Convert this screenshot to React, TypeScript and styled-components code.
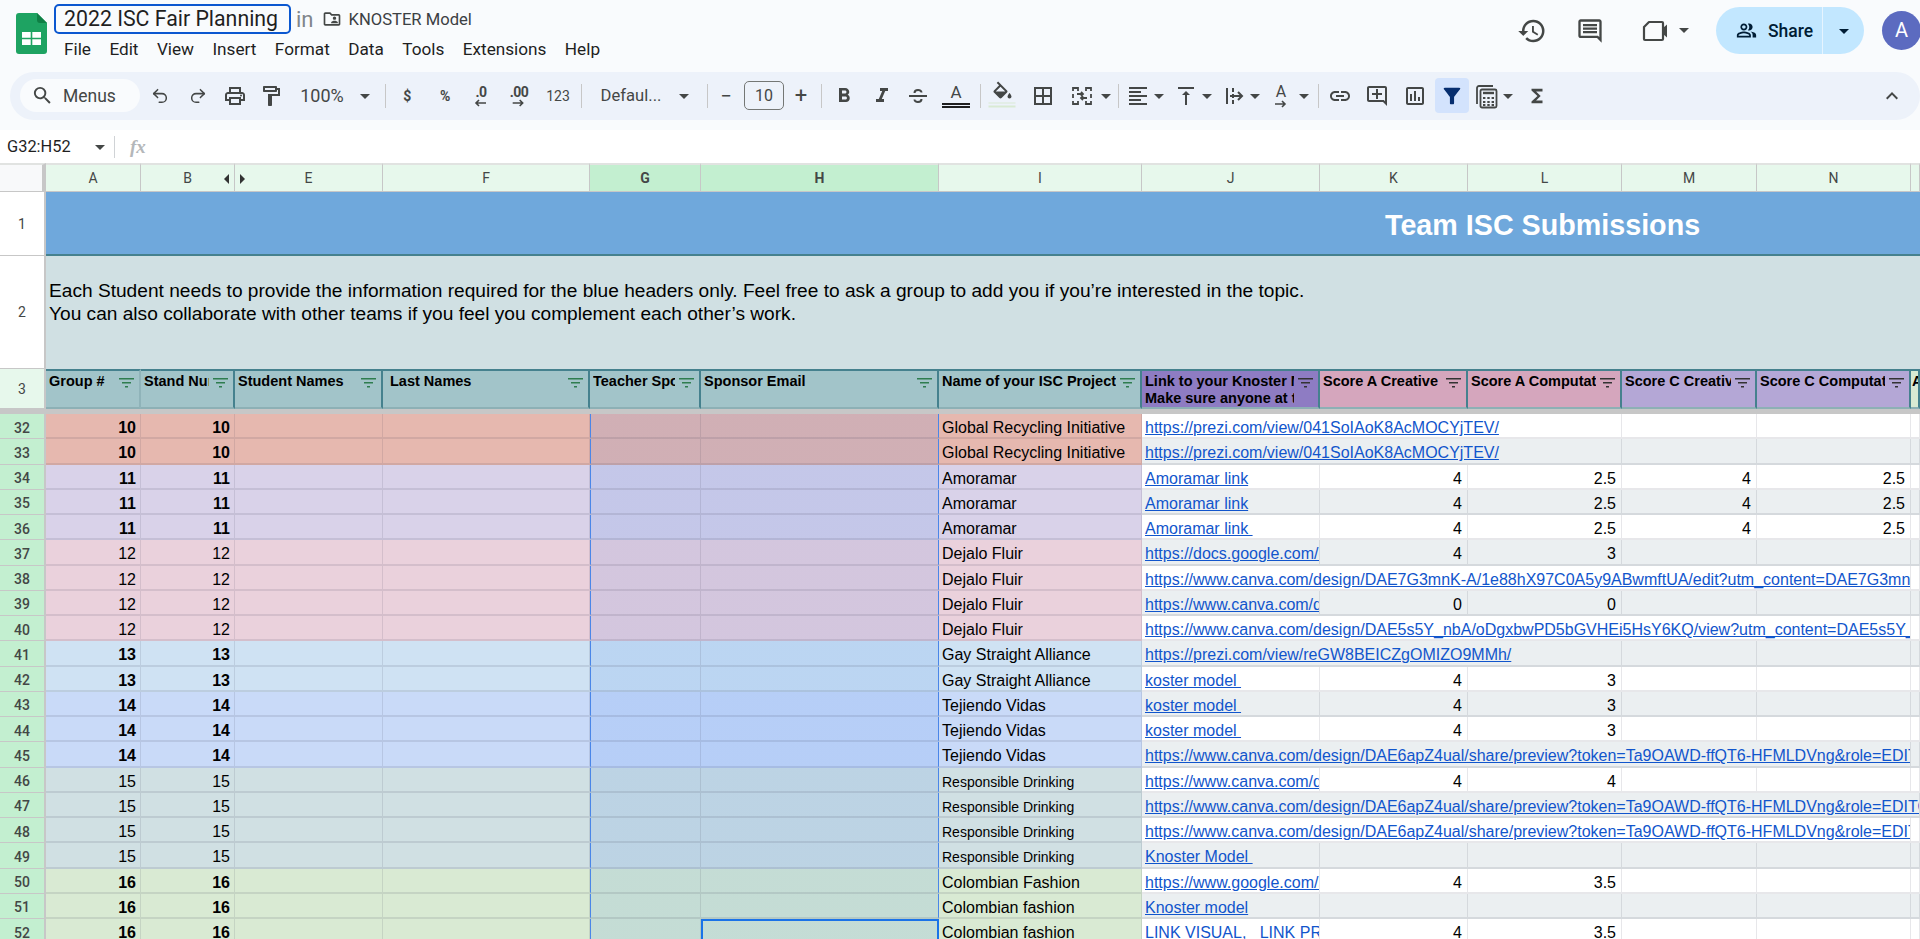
import React from 'react';
import styled, { createGlobalStyle } from 'styled-components';
import { Redo2, Undo2 } from 'lucide-react';
import {
  MdArrowDropDown, MdBorderAll, MdExpandLess, MdFilterAlt, MdFormatAlignLeft, MdFormatBold,
  MdFormatItalic, MdFunctions, MdHistory, MdLink, MdOutlineAddComment, MdOutlineComment, MdOutlineFolderShared,
  MdOutlineFormatPaint, MdOutlineInsertChart, MdOutlinePeopleAlt, MdOutlinePrint,
  MdSearch, MdVerticalAlignTop,
} from 'react-icons/md';

const ui = '"Roboto", "Liberation Sans", sans-serif';
const sheet = '"Liberation Sans", Arial, sans-serif';
const iconInk = '#444746';
const COLS = '46px 95px 94px 148px 207px 111px 238px 203px 178px 148px 154px 135px 154px 9px';
const selectTint = 'linear-gradient(rgba(14, 101, 235, 0.1), rgba(14, 101, 235, 0.1))';

const Global = createGlobalStyle`
  html, body { margin: 0; padding: 0; background: #fff; overflow: hidden; }
  * { box-sizing: border-box; }
`;

const Page = styled.div`
  position: relative;
  width: 1920px;
  height: 939px;
  overflow: hidden;
  font-family: ${ui};
`;

const Header = styled.header`
  position: relative;
  height: 130px;
  background: #f9fbfd;
`;

const Logo = styled.svg`
  position: absolute;
  left: 16px;
  top: 13px;
`;

const TitleRow = styled.div`
  position: absolute;
  left: 54px;
  top: 4px;
  display: flex;
  align-items: center;
  height: 30px;
`;

const TitleBox = styled.div`
  width: 237px;
  height: 30px;
  border: 2px solid #0b57d0;
  border-radius: 5px;
  padding-left: 8px;
  font-size: 21.3px;
  line-height: 25px;
  color: #1f1f1f;
  white-space: nowrap;
`;

const InWord = styled.span`
  margin-left: 5px;
  font-size: 22px;
  color: #80868b;
`;

const FolderMark = styled.span`
  display: flex;
  margin-left: 8px;
  color: ${iconInk};
`;

const FolderName = styled.span`
  margin-left: 7px;
  font-size: 16.6px;
  color: #3c4043;
  white-space: nowrap;
`;

const MenuBar = styled.nav`
  position: absolute;
  left: 64px;
  top: 39px;
  display: flex;
  gap: 18.4px;
  font-size: 17.2px;
  line-height: 21px;
  color: #1f1f1f;
`;

const Toolbar = styled.div`
  position: absolute;
  left: 10px;
  top: 72px;
  width: 1910px;
  height: 48px;
  border-radius: 24px;
  background: #edf2fa;
`;

const SearchPill = styled.div`
  position: absolute;
  left: 20px;
  top: 79px;
  width: 120px;
  height: 33px;
  border-radius: 17px;
  background: #f9fbfd;
  display: flex;
  align-items: center;
  padding-left: 11px;
  gap: 9px;
  font-size: 17.5px;
  color: #444746;
`;

const ToolSlot = styled.div<{ $x: number; $y?: number }>`
  position: absolute;
  left: ${(p) => p.$x}px;
  top: ${(p) => p.$y ?? 96}px;
  transform: translate(-50%, -50%);
  display: flex;
  flex-direction: column;
  align-items: center;
  color: ${iconInk};
  white-space: nowrap;
  line-height: 1;
`;

const SlotText = styled.span<{ $size: number }>`
  font-size: ${(p) => p.$size}px;
`;

const ToolSep = styled.div<{ $x: number }>`
  position: absolute;
  left: ${(p) => p.$x}px;
  top: 84px;
  width: 1px;
  height: 24px;
  background: #c7c7c7;
`;

const FontSizeBox = styled.div`
  position: absolute;
  left: 744px;
  top: 81px;
  width: 40px;
  height: 29px;
  border: 1px solid #747775;
  border-radius: 5px;
  text-align: center;
  font-size: 16px;
  line-height: 27px;
  color: #444746;
`;

const FilterActive = styled.div`
  position: absolute;
  left: 1435px;
  top: 78px;
  width: 34px;
  height: 35px;
  border-radius: 4px;
  background: #d3e3fd;
`;

const DecimalText = styled.span`
  font-size: 14px;
  font-weight: 700;
  letter-spacing: -0.5px;
`;

const TextColorLetter = styled.span`
  display: block;
  width: 28px;
  text-align: center;
  font-size: 17px;
  line-height: 16px;
  padding-bottom: 3px;
  border-bottom: 5px double #1f1f1f;
`;

const FillBar = styled.span`
  display: block;
  width: 27px;
  height: 5px;
  margin-top: 1px;
  border-top: 1px solid #d9ead3;
  border-bottom: 2px solid #d9ead3;
`;

const SharePill = styled.div`
  position: absolute;
  left: 1716px;
  top: 7px;
  width: 148px;
  height: 47px;
  border-radius: 24px;
  background: #c2e7ff;
  display: flex;
  align-items: center;
  color: #001d35;
  font-size: 17.5px;
  font-weight: 500;
`;

const ShareMain = styled.div`
  width: 107px;
  height: 100%;
  padding-left: 20px;
  display: flex;
  align-items: center;
  gap: 11px;
  border-right: 1px solid #e6f4ff;
`;

const ShareCaret = styled.div`
  flex: 1;
  display: flex;
  justify-content: center;
`;

const Avatar = styled.div`
  position: absolute;
  left: 1882px;
  top: 11px;
  width: 39px;
  height: 39px;
  border-radius: 50%;
  background: #5c6bc0;
  color: #fff;
  font-size: 20px;
  line-height: 39px;
  text-align: center;
`;

const FormulaBar = styled.div`
  position: relative;
  height: 33px;
  background: #fff;
  display: flex;
  align-items: center;
  padding-left: 7px;
  color: #1f1f1f;
  font-size: 16.4px;
`;

const NameBox = styled.div`
  width: 83px;
`;

const FormulaCaret = styled.div`
  width: 26px;
  display: flex;
  color: ${iconInk};
  margin-left: -2px;
`;

const FormulaSep = styled.div`
  width: 1px;
  height: 22px;
  background: #d0d3d6;
`;

const FxMark = styled.div`
  margin-left: 15px;
  font-family: "Liberation Serif", serif;
  font-style: italic;
  font-weight: 700;
  font-size: 19px;
  color: #b4b7ba;
`;

const Grid = styled.div`
  display: grid;
  grid-template-columns: ${COLS};
  grid-template-rows: 29px 64px 113px 40px 5px repeat(21, 25.25px);
  width: 1920px;
  font-family: ${sheet};
  color: #000;
`;

const Corner = styled.div`
  background: #f8f9fa;
  border-top: 2px solid #e1e3e1;
  border-right: 4px solid #c7c7c7;
  border-bottom: 1px solid #c7c7c7;
`;

const ColLabel = styled.div<{ $on?: boolean }>`
  position: relative;
  display: flex;
  align-items: center;
  justify-content: center;
  background: ${(p) => (p.$on ? '#c3efd0' : '#e7f8ec')};
  border-top: 2px solid #e1e3e1;
  border-right: 1px solid #c7c7c7;
  border-bottom: 1px solid #c7c7c7;
  font-family: ${ui};
  font-size: 14px;
  font-weight: ${(p) => (p.$on ? 700 : 400)};
  color: #444746;
`;

const HiddenArrow = styled.span<{ $side: 'left' | 'right' }>`
  position: absolute;
  top: 9px;
  ${(p) => (p.$side === 'left' ? 'right: 5px' : 'left: 5px')};
  border-top: 5px solid transparent;
  border-bottom: 5px solid transparent;
  ${(p) => (p.$side === 'left' ? 'border-right: 5px solid #333' : 'border-left: 5px solid #333')};
`;

const RowLabel = styled.div<{ $tone: 'plain' | 'soft' | 'on' }>`
  display: flex;
  align-items: center;
  justify-content: center;
  padding-top: ${(p) => (p.$tone === 'on' ? 3 : 0)}px;
  background: ${(p) => ({ plain: '#fff', soft: '#e7f8ec', on: '#c3efd0' }[p.$tone])};
  border-right: 2px solid #c7c7c7;
  border-bottom: 1px solid #c7c7c7;
  font-family: ${ui};
  font-size: 14px;
  font-weight: ${(p) => (p.$tone === 'on' ? 500 : 400)};
  color: #444746;
`;

const Banner = styled.div`
  grid-column: 2 / -1;
  background: #6fa8dc;
  border-bottom: 2px solid #45818e;
  padding: 16px 0 0 1339px;
  color: #fff;
  font-size: 28.7px;
  font-weight: 700;
  line-height: 34px;
  white-space: nowrap;
`;

const Notice = styled.div`
  grid-column: 2 / -1;
  background: #d0e0e3;
  padding: 23px 0 0 3px;
  font-size: 19.14px;
  line-height: 23px;
  white-space: nowrap;
`;

const ColHead = styled.div<{ $bg: string; $soft?: boolean }>`
  position: relative;
  background: ${(p) => p.$bg};
  border-top: 2px solid #45818e;
  border-right: 2px solid ${(p) => (p.$soft ? '#8fb3b9' : '#45818e')};
  border-bottom: 2px solid #8db0b5;
  font-size: 14.5px;
  font-weight: 700;
  line-height: 17px;
  white-space: nowrap;
`;

const HeadLabel = styled.div<{ $inset?: number; $open?: boolean }>`
  margin: 2px ${(p) => (p.$open ? 0 : 24)}px 0 ${(p) => p.$inset ?? 3}px;
  overflow: hidden;
`;

const FilterGlyph = styled.svg`
  position: absolute;
  right: 5px;
  top: 6px;
`;

const FreezeBar = styled.div`
  grid-column: 1 / -1;
  background: #c7c7c7;
`;

const Tinted = styled.div<{ $bg: string; $sel?: boolean; $leftEdge?: boolean; $rightEdge?: boolean }>`
  display: flex;
  align-items: center;
  min-width: 0;
  padding-top: 5px;
  overflow: hidden;
  background-color: ${(p) => p.$bg};
  background-image: ${(p) => (p.$sel ? selectTint : 'none')};
  border-right: 1px solid ${(p) => (p.$rightEdge ? '#4a86e8' : 'rgba(60, 60, 80, 0.12)')};
  border-bottom: 2px solid rgba(60, 60, 80, 0.12);
  border-left: ${(p) => (p.$leftEdge ? '1px solid #4a86e8' : '0')};
`;

const GroupCell = styled(Tinted)<{ $bold: boolean }>`
  justify-content: flex-end;
  padding-right: 4px;
  font-size: 16px;
  font-weight: ${(p) => (p.$bold ? 700 : 400)};
`;

const ActiveCell = styled(Tinted)`
  border: 2px solid #1a73e8;
`;

const ProjectCell = styled(Tinted)<{ $small: boolean }>`
  padding-left: 3px;
  font-size: ${(p) => (p.$small ? 14 : 16)}px;
  white-space: nowrap;
`;

const LinkCell = styled(Tinted)<{ $span: number }>`
  grid-column: span ${(p) => p.$span};
  padding-left: 3px;
`;

const LinkText = styled.a`
  color: #1155cc;
  text-decoration: underline;
  font-size: 16px;
  white-space: pre;
`;

const ScoreCell = styled(Tinted)`
  justify-content: flex-end;
  padding-right: 5px;
  font-size: 16px;
`;

const Lines = ({ dark }: { dark?: boolean }) => (
  <FilterGlyph width="15" height="12" viewBox="0 0 15 12" fill={dark ? '#333' : '#2e7d4f'}>
    <rect x="0" y="1" width="15" height="1.5" />
    <rect x="3" y="5" width="9" height="1.5" />
    <rect x="6" y="9" width="3" height="1.5" />
  </FilterGlyph>
);

const SheetsLogo = () => (
  <Logo width="31" height="41" viewBox="0 0 31 41">
    <path d="M3 0h18l10 10v28a3 3 0 0 1-3 3H3a3 3 0 0 1-3-3V3a3 3 0 0 1 3-3z" fill="#1ea362" />
    <path d="M21 0l10 10h-7a3 3 0 0 1-3-3z" fill="#0f7f45" />
    <path d="M6 19h19v13H6z" fill="#fff" />
    <path d="M14.7 19h1.6v13h-1.6zM6 24.7h19v1.6H6z" fill="#1ea362" />
  </Logo>
);

const Caret = ({ x, y }: { x: number; y?: number }) => (
  <ToolSlot $x={x} $y={y}>
    <MdArrowDropDown size={24} />
  </ToolSlot>
);

const ArrowUnder = ({ left }: { left?: boolean }) => (
  <svg width="14" height="8" viewBox="0 0 14 8" fill="none" stroke={iconInk} strokeWidth="1.6">
    <path d={left ? 'M12 4H2M5 1L2 4l3 3' : 'M1 4h10M8 1l3 3-3 3'} />
  </svg>
);

const MergeIcon = () => (
  <svg width="24" height="24" viewBox="0 0 24 24" fill="none" stroke={iconInk} strokeWidth="1.8">
    <path d="M8 7V4H3v3M3 17v3h5v-3M3 10v4M16 7V4h5v3M21 17v3h-5v-3M21 10v4" />
    <path d="M11 8l2 2-2 2M7 10h6M13 12l-2 2 2 2M11 14h6" />
  </svg>
);

const WrapIcon = () => (
  <svg width="24" height="24" viewBox="0 0 24 24" fill="none" stroke={iconInk} strokeWidth="2">
    <path d="M5 4v16M11 4v4M11 10v4M11 16v4M8 12h12M16 8l4 4-4 4" />
  </svg>
);

const FunctionCard = () => (
  <svg width="24" height="26" viewBox="0 0 24 26" fill="none" stroke={iconInk} strokeWidth="1.8">
    <path d="M3 21V5a2 2 0 0 1 2-2h14" />
    <rect x="6.5" y="6.5" width="16" height="18" rx="1.5" />
    <path d="M9 10h11" strokeWidth="2.4" />
    <path d="M9 15h2.4M13.3 15h2.4M17.6 15H20M9 19h2.4M13.3 19h2.4M17.6 19H20M9 22h2.4M13.3 22h2.4M17.6 22H20" strokeWidth="2" />
  </svg>
);

const StrikeIcon = () => (
  <svg width="24" height="24" viewBox="0 0 24 24" fill="none" stroke={iconInk} strokeWidth="2">
    <path d="M3 12h18M8.5 9c0-4 7-4 7-.5M8.5 15.5c0 3.5 7 3.5 7-.5" />
  </svg>
);

const FillIcon = () => (
  <svg width="24" height="21" viewBox="0 0 24 19" fill={iconInk}>
    <path d="M16.56 8.94L7.62 0 6.21 1.41l2.38 2.38-5.15 5.15c-.59.59-.59 1.54 0 2.12l5.5 5.5c.29.29.68.44 1.06.44s.77-.15 1.06-.44l5.5-5.5c.59-.58.59-1.53 0-2.11zM5.21 10L10 5.21 14.79 10H5.21zM19 11.5s-2 2.17-2 3.5c0 1.1.9 2 2 2s2-.9 2-2c0-1.33-2-3.5-2-3.5z" />
  </svg>
);

const MeetIcon = () => (
  <svg width="28" height="22" viewBox="0 0 28 22" fill="none" stroke={iconInk} strokeWidth="2.2">
    <path d="M8 2h13a1 1 0 0 1 1 1v16a1 1 0 0 1-1 1H4a1 1 0 0 1-1-1V7z" strokeLinejoin="round" />
    <path d="M22 8l4-3.5v13L22 14z" fill={iconInk} stroke="none" />
  </svg>
);

type Kind = { group: number; name: string; bg: string; bold: boolean; small?: boolean };

const c = {
  red: '#e6b8af', violet: '#d9d2e9', pink: '#ead1dc', sky: '#cfe2f3',
  blue: '#c9daf8', teal: '#d0e0e3', green: '#d9ead3',
};

const recycling: Kind = { group: 10, name: 'Global Recycling Initiative', bg: c.red, bold: true };
const amoramar: Kind = { group: 11, name: 'Amoramar', bg: c.violet, bold: true };
const dejalo: Kind = { group: 12, name: 'Dejalo Fluir', bg: c.pink, bold: false };
const alliance: Kind = { group: 13, name: 'Gay Straight Alliance', bg: c.sky, bold: true };
const vidas: Kind = { group: 14, name: 'Tejiendo Vidas', bg: c.blue, bold: true };
const drinking: Kind = { group: 15, name: 'Responsible Drinking', bg: c.teal, bold: false, small: true };
const fashion: Kind = { group: 16, name: 'Colombian Fashion', bg: c.green, bold: true };

const canvaShare = 'https://www.canva.com/design/DAE6apZ4ual/share/preview?token=Ta9OAWD-ffQT6-HFMLDVng&role=EDITOR';
const prezi = 'https://prezi.com/view/041SoIAoK8AcMOCYjTEV/';

type Row = { kind: Kind; name?: string; link: string; span?: number; scores?: string[] };

const rows: Row[] = [
  { kind: recycling, link: prezi, span: 3, scores: ['', ''] },
  { kind: recycling, link: prezi, span: 3, scores: ['', ''] },
  { kind: amoramar, link: 'Amoramar link', scores: ['4', '2.5', '4', '2.5'] },
  { kind: amoramar, link: 'Amoramar link', scores: ['4', '2.5', '4', '2.5'] },
  { kind: amoramar, link: 'Amoramar link ', scores: ['4', '2.5', '4', '2.5'] },
  { kind: dejalo, link: 'https://docs.google.com/document/d/1', scores: ['4', '3', '', ''] },
  { kind: dejalo, link: 'https://www.canva.com/design/DAE7G3mnK-A/1e88hX97C0A5y9ABwmftUA/edit?utm_content=DAE7G3mnK-A', span: 5 },
  { kind: dejalo, link: 'https://www.canva.com/design/DAE', scores: ['0', '0', '', ''] },
  { kind: dejalo, link: 'https://www.canva.com/design/DAE5s5Y_nbA/oDgxbwPD5bGVHEi5HsY6KQ/view?utm_content=DAE5s5Y_nbA', span: 5 },
  { kind: alliance, link: 'https://prezi.com/view/reGW8BEICZgOMIZO9MMh/', span: 3, scores: ['', ''] },
  { kind: alliance, link: 'koster model ', scores: ['4', '3', '', ''] },
  { kind: vidas, link: 'koster model ', scores: ['4', '3', '', ''] },
  { kind: vidas, link: 'koster model ', scores: ['4', '3', '', ''] },
  { kind: vidas, link: canvaShare, span: 5 },
  { kind: drinking, link: 'https://www.canva.com/design/DAE', scores: ['4', '4', '', ''] },
  { kind: drinking, link: canvaShare, span: 6 },
  { kind: drinking, link: canvaShare, span: 5 },
  { kind: drinking, link: 'Knoster Model ', scores: ['', '', '', ''] },
  { kind: fashion, link: 'https://www.google.com/search?q=', scores: ['4', '3.5', '', ''] },
  { kind: fashion, name: 'Colombian fashion', link: 'Knoster model', scores: ['', '', '', ''] },
  { kind: fashion, name: 'Colombian fashion', link: 'LINK VISUAL,   LINK PRESENTATION', scores: ['4', '3.5', '', ''] },
];

const heads: { label: React.ReactNode; bg: string; inset?: number; soft?: boolean; dark?: boolean }[] = [
  { label: 'Group #', bg: '#a2c4c9', soft: true },
  { label: 'Stand Number', bg: '#a2c4c9' },
  { label: 'Student Names', bg: '#a2c4c9' },
  { label: 'Last Names', bg: '#a2c4c9', inset: 7 },
  { label: 'Teacher Sponsor', bg: '#a2c4c9' },
  { label: 'Sponsor Email', bg: '#a2c4c9' },
  { label: 'Name of your ISC Project', bg: '#a2c4c9' },
  {
    label: <>Link to your Knoster Model<br />Make sure anyone at the link can view</>,
    bg: '#8e7cc3', dark: true,
  },
  { label: 'Score A Creative', bg: '#d5a6bd', dark: true },
  { label: 'Score A Computational', bg: '#d5a6bd', dark: true },
  { label: 'Score C Creative', bg: '#b4a7d6', dark: true },
  { label: 'Score C Computational', bg: '#b4a7d6', dark: true },
];

const letters = ['A', 'B', 'E', 'F', 'G', 'H', 'I', 'J', 'K', 'L', 'M', 'N'];

const paper = (n: number) => (n % 2 === 0 ? '#ffffff' : '#ebeff1');

export default function App() {
  return (
    <Page>
      <Global />
      <Header>
        <SheetsLogo />
        <TitleRow>
          <TitleBox>2022 ISC Fair Planning</TitleBox>
          <InWord>in</InWord>
          <FolderMark><MdOutlineFolderShared size={20} /></FolderMark>
          <FolderName>KNOSTER Model</FolderName>
        </TitleRow>
        <MenuBar>
          {['File', 'Edit', 'View', 'Insert', 'Format', 'Data', 'Tools', 'Extensions', 'Help'].map((m) => (
            <span key={m}>{m}</span>
          ))}
        </MenuBar>

        <ToolSlot $x={1532} $y={31}><MdHistory size={30} /></ToolSlot>
        <ToolSlot $x={1590} $y={31}><MdOutlineComment size={28} /></ToolSlot>
        <ToolSlot $x={1655} $y={31}><MeetIcon /></ToolSlot>
        <Caret x={1684} y={30} />
        <SharePill>
          <ShareMain>
            <MdOutlinePeopleAlt size={21} />
            <span>Share</span>
          </ShareMain>
          <ShareCaret><MdArrowDropDown size={24} /></ShareCaret>
        </SharePill>
        <Avatar>A</Avatar>

        <Toolbar />
        <SearchPill>
          <MdSearch size={23} />
          <span>Menus</span>
        </SearchPill>
        <ToolSlot $x={160}><Undo2 size={19} strokeWidth={1.9} /></ToolSlot>
        <ToolSlot $x={198}><Redo2 size={19} strokeWidth={1.9} /></ToolSlot>
        <ToolSlot $x={235}><MdOutlinePrint size={24} /></ToolSlot>
        <ToolSlot $x={271}><MdOutlineFormatPaint size={24} /></ToolSlot>
        <ToolSlot $x={322}><SlotText $size={18}>100%</SlotText></ToolSlot>
        <Caret x={365} />
        <ToolSep $x={385} />
        <ToolSlot $x={407}><DecimalText>$</DecimalText></ToolSlot>
        <ToolSlot $x={445}><DecimalText>%</DecimalText></ToolSlot>
        <ToolSlot $x={481}><DecimalText>.0</DecimalText><ArrowUnder left /></ToolSlot>
        <ToolSlot $x={519}><DecimalText>.00</DecimalText><ArrowUnder /></ToolSlot>
        <ToolSlot $x={558}><SlotText $size={14}>123</SlotText></ToolSlot>
        <ToolSep $x={581} />
        <ToolSlot $x={631}><SlotText $size={16.6}>Defaul...</SlotText></ToolSlot>
        <Caret x={684} />
        <ToolSep $x={707} />
        <ToolSlot $x={726}><SlotText $size={20}>−</SlotText></ToolSlot>
        <FontSizeBox>10</FontSizeBox>
        <ToolSlot $x={801}><SlotText $size={22}>+</SlotText></ToolSlot>
        <ToolSep $x={821} />
        <ToolSlot $x={844}><MdFormatBold size={24} /></ToolSlot>
        <ToolSlot $x={882}><MdFormatItalic size={24} /></ToolSlot>
        <ToolSlot $x={918}><StrikeIcon /></ToolSlot>
        <ToolSlot $x={956}><TextColorLetter>A</TextColorLetter></ToolSlot>
        <ToolSep $x={980} />
        <ToolSlot $x={1002} $y={94}>
          <FillIcon />
          <FillBar />
        </ToolSlot>
        <ToolSlot $x={1043}><MdBorderAll size={24} /></ToolSlot>
        <ToolSlot $x={1082}><MergeIcon /></ToolSlot>
        <Caret x={1106} />
        <ToolSep $x={1118} />
        <ToolSlot $x={1138}><MdFormatAlignLeft size={24} /></ToolSlot>
        <Caret x={1159} />
        <ToolSlot $x={1186}><MdVerticalAlignTop size={24} /></ToolSlot>
        <Caret x={1207} />
        <ToolSlot $x={1234}><WrapIcon /></ToolSlot>
        <Caret x={1255} />
        <ToolSlot $x={1281}><SlotText $size={16}>A</SlotText><ArrowUnder /></ToolSlot>
        <Caret x={1304} />
        <ToolSep $x={1318} />
        <ToolSlot $x={1340}><MdLink size={24} /></ToolSlot>
        <ToolSlot $x={1377}><MdOutlineAddComment size={24} /></ToolSlot>
        <ToolSlot $x={1415}><MdOutlineInsertChart size={24} /></ToolSlot>
        <FilterActive />
        <ToolSlot $x={1452}><MdFilterAlt size={25} color="#062e6f" /></ToolSlot>
        <ToolSlot $x={1486}><FunctionCard /></ToolSlot>
        <Caret x={1508} />
        <ToolSlot $x={1537}><MdFunctions size={22} /></ToolSlot>
        <ToolSlot $x={1892}><MdExpandLess size={24} /></ToolSlot>
      </Header>

      <FormulaBar>
        <NameBox>G32:H52</NameBox>
        <FormulaCaret><MdArrowDropDown size={24} /></FormulaCaret>
        <FormulaSep />
        <FxMark>fx</FxMark>
      </FormulaBar>

      <Grid>
        <Corner />
        {letters.map((l) => (
          <ColLabel key={l} $on={l === 'G' || l === 'H'}>
            {l}
            {l === 'B' && <HiddenArrow $side="left" />}
            {l === 'E' && <HiddenArrow $side="right" />}
          </ColLabel>
        ))}
        <ColLabel />

        <RowLabel $tone="plain">1</RowLabel>
        <Banner>Team ISC Submissions</Banner>

        <RowLabel $tone="plain">2</RowLabel>
        <Notice>
          Each Student needs to provide the information required for the blue headers only. Feel free to ask a group to add you if you’re interested in the topic.
          <br />
          You can also collaborate with other teams if you feel you complement each other’s work.
        </Notice>

        <RowLabel $tone="soft">3</RowLabel>
        {heads.map((h, i) => (
          <ColHead key={i} $bg={h.bg} $soft={h.soft}>
            <HeadLabel $inset={h.inset}>{h.label}</HeadLabel>
            <Lines dark={h.dark} />
          </ColHead>
        ))}
        <ColHead $bg="#d9ead3"><HeadLabel $inset={1} $open>A</HeadLabel></ColHead>

        <FreezeBar />

        {rows.map((r, i) => {
          const num = 32 + i;
          const bg = r.kind.bg;
          const white = paper(num);
          const span = r.span ?? 1;
          return (
            <React.Fragment key={num}>
              <RowLabel $tone="on">{num}</RowLabel>
              <GroupCell $bg={bg} $bold={r.kind.bold}>{r.kind.group}</GroupCell>
              <GroupCell $bg={bg} $bold={r.kind.bold}>{r.kind.group}</GroupCell>
              <Tinted $bg={bg} />
              <Tinted $bg={bg} />
              <Tinted $bg={bg} $sel $leftEdge />
              {num === 52 ? <ActiveCell $bg={bg} $sel /> : <Tinted $bg={bg} $sel $rightEdge />}
              <ProjectCell $bg={bg} $small={!!r.kind.small}>{r.name ?? r.kind.name}</ProjectCell>
              <LinkCell $bg={white} $span={span}>
                <LinkText>{r.link}</LinkText>
              </LinkCell>
              {(r.scores ?? []).map((s, k) => (
                <ScoreCell key={k} $bg={white}>{s}</ScoreCell>
              ))}
              {span < 6 && <Tinted $bg={white} />}
            </React.Fragment>
          );
        })}
      </Grid>
    </Page>
  );
}
